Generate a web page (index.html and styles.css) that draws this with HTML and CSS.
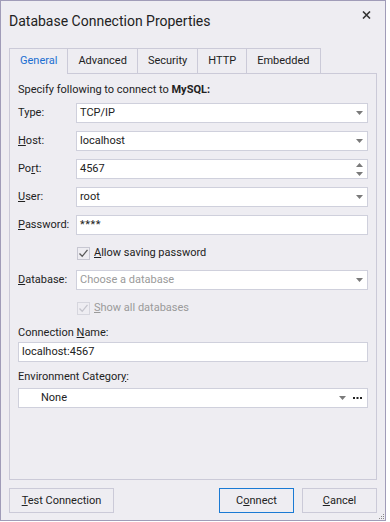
FILE: index.html
```html
<!DOCTYPE html>
<html>
<head>
<meta charset="utf-8">
<link rel="stylesheet" href="styles.css">
</head>
<body>
<div class="window">
  <header class="titlebar">
    <h1 class="title">Database Connection Properties</h1>
    <svg class="close" width="9" height="8" viewBox="0 0 9 8"><path d="M1 0.5 L8 7.5 M8 0.5 L1 7.5" stroke="#333" stroke-width="1.6" fill="none"/></svg>
  </header>
  <nav class="tabs">
    <div class="tab active">General</div>
    <div class="tab">Advanced</div>
    <div class="tab">Security</div>
    <div class="tab">HTTP</div>
    <div class="tab">Embedded</div>
  </nav>
  <section class="panel">
    <p class="intro">Specify following to connect to <b>MySQL:</b></p>
    <div class="row first">
      <span class="label">Type:</span>
      <div class="field"><span class="val">TCP/IP</span><svg class="arrow" width="7" height="4" viewBox="0 0 7 4"><path d="M0 0 H7 L3.5 4 Z" fill="#7a7a7a"/></svg></div>
    </div>
    <div class="row">
      <span class="label"><u>H</u>ost:</span>
      <div class="field"><span class="val">localhost</span><svg class="arrow" width="7" height="4" viewBox="0 0 7 4"><path d="M0 0 H7 L3.5 4 Z" fill="#7a7a7a"/></svg></div>
    </div>
    <div class="row">
      <span class="label">Po<u>r</u>t:</span>
      <div class="field"><span class="val">4567</span><svg class="spin" width="7" height="13" viewBox="0 0 7 13"><path d="M3.5 0 L7 4 H0 Z M0 9 H7 L3.5 13 Z" fill="#7a7a7a"/></svg></div>
    </div>
    <div class="row">
      <span class="label"><u>U</u>ser:</span>
      <div class="field"><span class="val">root</span><svg class="arrow" width="7" height="4" viewBox="0 0 7 4"><path d="M0 0 H7 L3.5 4 Z" fill="#7a7a7a"/></svg></div>
    </div>
    <div class="row">
      <span class="label"><u>P</u>assword:</span>
      <div class="field"><span class="val pw">****</span></div>
    </div>
    <div class="check-row">
      <span class="box"><svg width="11" height="11" viewBox="0 0 11 11"><path d="M1.5 5.5 L4.2 8.3 L9.5 1.8" stroke="#5a5a5a" stroke-width="1.3" fill="none"/></svg></span>
      <span><u>A</u>llow saving password</span>
    </div>
    <div class="row db">
      <span class="label"><u>D</u>atabase:</span>
      <div class="field"><span class="val placeholder">Choose a database</span><svg class="arrow" width="7" height="4" viewBox="0 0 7 4"><path d="M0 0 H7 L3.5 4 Z" fill="#7a7a7a"/></svg></div>
    </div>
    <div class="check-row disabled">
      <span class="box"><svg width="11" height="11" viewBox="0 0 11 11"><path d="M1.5 5.5 L4.2 8.3 L9.5 1.8" stroke="#c4c4cc" stroke-width="1.3" fill="none"/></svg></span>
      <span><u>S</u>how all databases</span>
    </div>
    <p class="block-label name-label">Connection <u>N</u>ame:</p>
    <div class="field wide"><span class="val">localhost:4567</span></div>
    <p class="block-label env-label">Environment Categor<u>y</u>:</p>
    <div class="field wide env"><span class="val none">None</span><svg class="arrow" width="7" height="4" viewBox="0 0 7 4"><path d="M0 0 H7 L3.5 4 Z" fill="#7a7a7a"/></svg><svg class="dots" width="9" height="3" viewBox="0 0 9 3"><rect x="0" y="0" width="2" height="2" fill="#222"/><rect x="3.5" y="0" width="2" height="2" fill="#222"/><rect x="7" y="0" width="2" height="2" fill="#222"/></svg></div>
  </section>
  <footer class="buttons">
    <button class="btn test"><u>T</u>est Connection</button>
    <button class="btn connect">C<u>o</u>nnect</button>
    <button class="btn cancel"><u>C</u>ancel</button>
  </footer>
  <svg class="grip" width="7" height="7" viewBox="0 0 7 7">
    <rect x="5" y="1" width="1" height="1" fill="#888"/>
    <rect x="3" y="3" width="1" height="1" fill="#888"/><rect x="5" y="3" width="1" height="1" fill="#888"/>
    <rect x="1" y="5" width="1" height="1" fill="#888"/><rect x="3" y="5" width="1" height="1" fill="#888"/><rect x="5" y="5" width="1" height="1" fill="#888"/>
  </svg>
</div>
</body>
</html>
```

FILE: styles.css
```css
html, body {
  margin: 0;
  padding: 0;
  background: #ffffff;
}
body {
  font-family: Roboto, "Noto Sans", sans-serif;
  font-size: 11px;
  line-height: 16px;
  color: #222;
}
.window {
  position: relative;
  width: 386px;
  height: 521px;
  box-sizing: border-box;
  border: 1px solid #a09cb8;
  background: #eeedf2;
  padding: 0 8px;
  display: flex;
  flex-direction: column;
}
.titlebar {
  height: 47px;
  flex: none;
  display: flex;
  justify-content: space-between;
  align-items: flex-start;
}
.title {
  margin: 10px 0 0 0;
  font-size: 14px;
  line-height: 20px;
  font-weight: normal;
  color: #222;
}
.close {
  margin: 10px 6px 0 0;
}
.tabs {
  height: 25px;
  flex: none;
  display: flex;
  align-items: flex-start;
}
.tab {
  height: 25px;
  box-sizing: border-box;
  border: 1px solid #cbcad8;
  border-bottom: none;
  margin-right: -1px;
  padding: 0 10px;
  line-height: 23px;
  color: #222;
  background: #eeedf2;
}
.tab.active {
  position: relative;
  z-index: 1;
  height: 26px;
  color: #1b6fd1;
}
.panel {
  height: 407px;
  flex: none;
  box-sizing: border-box;
  border: 1px solid #cbcad8;
  padding: 8px 8px 0 8px;
  display: flex;
  flex-direction: column;
}
.intro {
  margin: 0;
}
.row {
  display: flex;
  align-items: center;
  margin-top: 8px;
}
.row.first {
  margin-top: 5px;
}
.label {
  width: 58px;
  flex: none;
}
.field {
  flex: 1;
  height: 20px;
  box-sizing: border-box;
  border: 1px solid #cfd0dc;
  background: #fff;
  padding: 0 4px 0 3px;
  display: flex;
  align-items: center;
}
.val {
  flex: 1;
}
.pw {
  letter-spacing: 0.5px;
}
.placeholder {
  color: #9a9a9a;
}
.arrow {
  flex: none;
}
.spin {
  flex: none;
}
.check-row {
  display: flex;
  align-items: center;
  height: 18px;
  margin-top: 9px;
  padding-left: 59px;
}
.check-row.disabled {
  color: #9a9a9a;
}
.box {
  width: 13px;
  height: 13px;
  box-sizing: border-box;
  border: 1px solid #c7c7d2;
  background: #eeedf2;
  margin-right: 4px;
  display: flex;
  align-items: center;
  justify-content: center;
}
.row.db {
  margin-top: 8px;
}
.check-row.disabled .box {
  border-color: #d6d6de;
}
.block-label {
  margin: 0;
}
.name-label {
  margin-top: 8px;
}
.env-label {
  margin-top: 7px;
}
.field.wide {
  flex: none;
  margin-top: 1px;
}
.field.env {
  margin-top: 3px;
  padding-left: 22px;
  padding-right: 5px;
}
.dots {
  flex: none;
  margin-left: 7px;
}
.buttons {
  flex: none;
  display: flex;
  margin-top: 8px;
  height: 25px;
}
.btn {
  height: 25px;
  box-sizing: border-box;
  border: 1px solid #cbcad8;
  background: #eeedf2;
  font-family: Roboto, "Noto Sans", sans-serif;
  font-size: 11px;
  color: #222;
  padding: 0;
}
.btn.test {
  width: 105px;
}
.btn.connect {
  width: 75px;
  margin-left: auto;
  border-color: #1a7ad4;
}
.btn.cancel {
  width: 75px;
  margin-left: 8px;
}
.grip {
  position: absolute;
  right: 0;
  bottom: 0;
}
```
